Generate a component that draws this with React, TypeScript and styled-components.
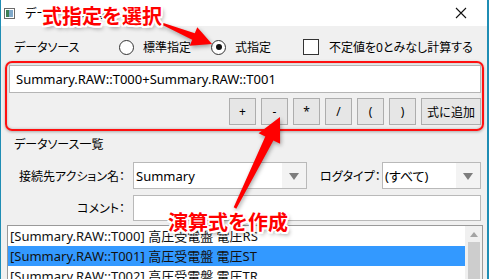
import styled, { createGlobalStyle } from 'styled-components';

const GlobalStyle = createGlobalStyle`
  body {
    margin: 0;
    background: #ffffff;
    font-family: "Noto Sans", "Noto Sans CJK JP", sans-serif;
    font-feature-settings: "palt";
    color: #000;
  }
`;

type Point = [number, number];

// builds a tapered arrow polygon from tail to tip
const arrowPoints = (
  tail: Point,
  tip: Point,
  tailW: number,
  neckW: number,
  headW: number,
  headL: number,
) => {
  const [x0, y0] = tail;
  const [x1, y1] = tip;
  const len = Math.hypot(x1 - x0, y1 - y0);
  const ux = (x1 - x0) / len;
  const uy = (y1 - y0) / len;
  const nx = -uy;
  const ny = ux;
  const bx = x1 - ux * headL;
  const by = y1 - uy * headL;
  const pts: Point[] = [
    [x0 + (nx * tailW) / 2, y0 + (ny * tailW) / 2],
    [bx + (nx * neckW) / 2, by + (ny * neckW) / 2],
    [bx + (nx * headW) / 2, by + (ny * headW) / 2],
    [x1, y1],
    [bx - (nx * headW) / 2, by - (ny * headW) / 2],
    [bx - (nx * neckW) / 2, by - (ny * neckW) / 2],
    [x0 - (nx * tailW) / 2, y0 - (ny * tailW) / 2],
  ];
  return pts.map((p) => p.map((v) => v.toFixed(1)).join(',')).join(' ');
};

const operators = ['+', '-', '*', '/', '(', ')'];

const sources = [
  { id: 'T000', name: '高圧受電盤 電圧RS' },
  { id: 'T001', name: '高圧受電盤 電圧ST' },
  { id: 'T002', name: '高圧受電盤 電圧TR' },
];

const App: React.FC = () => {
  return (
    <>
      <GlobalStyle />
      <Window>
        <TitleBar>
          <AppIcon width="11" height="11" viewBox="0 0 11 11">
            <rect x="0.5" y="0.5" width="10" height="10" fill="#fff" stroke="#6b6b6b" />
            <rect x="2" y="2" width="3" height="7" fill="#3d7f56" />
            <rect x="5" y="2" width="4" height="7" fill="#7fa8c9" />
          </AppIcon>
          <Title>データソース選択</Title>
          <CloseIcon width="12" height="12" viewBox="0 0 12 12">
            <path d="M1 1 L11 11 M11 1 L1 11" stroke="#111" strokeWidth="1.1" />
          </CloseIcon>
        </TitleBar>

        <Body>
          <SourceRow>
            <Label>データソース</Label>
            <Option>
              <Radio />
              <span>標準指定</span>
            </Option>
            <Option>
              <Radio $checked />
              <span>式指定</span>
            </Option>
            <Option>
              <CheckBox />
              <span>不定値を0とみなし計算する</span>
            </Option>
          </SourceRow>

          <FormulaBox>
            <FormulaInput>Summary.RAW::T000+Summary.RAW::T001</FormulaInput>
            <OperatorRow>
              {operators.map((op) => (
                <OpButton key={op}>{op}</OpButton>
              ))}
              <OpButton $wide>式に追加</OpButton>
            </OperatorRow>
          </FormulaBox>

          <SectionTitle>データソース一覧</SectionTitle>

          <FilterGrid>
            <FieldLabel>接続先アクション名：</FieldLabel>
            <Combo>
              <ComboValue>Summary</ComboValue>
              <ComboArrow />
            </Combo>
            <SideLabel>ログタイプ：</SideLabel>
            <Combo>
              <ComboValue>(すべて)</ComboValue>
              <ComboArrow />
            </Combo>
            <FieldLabel>コメント：</FieldLabel>
            <CommentInput />
          </FilterGrid>

          <SourceList>
            <Rows>
              {sources.map((s) => (
                <Row key={s.id} $selected={s.id === 'T001'}>
                  [Summary.RAW::{s.id}] {s.name}
                </Row>
              ))}
            </Rows>
            <ScrollBar>
              <ScrollUp />
              <ScrollThumb />
            </ScrollBar>
          </SourceList>
        </Body>

        <Overlay width="490" height="279" viewBox="0 0 490 279">
          <polygon
            points={arrowPoints([163, 24], [212, 44], 2, 7, 20, 20)}
            fill="#ff0000"
          />
          <polygon
            points={arrowPoints([235, 208], [280, 117], 3, 9, 24, 24)}
            fill="#ff0000"
          />
        </Overlay>
        <Callout $left={42} $top={3}>
          式指定を選択
        </Callout>
        <Callout $left={168} $top={209}>
          演算式を作成
        </Callout>
      </Window>
    </>
  );
};

const Window = styled.div`
  position: relative;
  width: 486px;
  height: 279px;
  overflow: hidden;
  background: #f0f0f0;
  border-left: 1px solid #1f8db4;
  border-right: 2px solid #1f8db4;
  font-size: 12px;
`;

const TitleBar = styled.div`
  display: flex;
  align-items: center;
  height: 26px;
  background: #ffffff;
  padding-left: 3px;
`;

const AppIcon = styled.svg`
  flex: none;
`;

const Title = styled.span`
  margin-left: 10px;
  font-size: 12px;
`;

const CloseIcon = styled.svg`
  margin-left: auto;
  margin-right: 20px;
`;

const Body = styled.div`
  display: flex;
  flex-direction: column;
  padding-left: 4px;
`;

const SourceRow = styled.div`
  display: grid;
  grid-template-columns: 105px 92px 92px auto;
  align-items: center;
  height: 18px;
  margin-top: 12px;
  padding-left: 9px;
`;

const Label = styled.span``;

const Option = styled.label`
  display: flex;
  align-items: center;
  gap: 9px;
`;

const Radio = styled.span<{ $checked?: boolean }>`
  position: relative;
  width: 13px;
  height: 13px;
  border: 1px solid #333;
  border-radius: 50%;
  background: #fff;

  &::after {
    content: '';
    display: ${({ $checked }) => ($checked ? 'block' : 'none')};
    position: absolute;
    left: 3.5px;
    top: 3.5px;
    width: 6px;
    height: 6px;
    border-radius: 50%;
    background: #111;
  }
`;

const CheckBox = styled.span`
  width: 14px;
  height: 14px;
  border: 1px solid #333;
  background: #fff;
  margin-right: 1px;
`;

const FormulaBox = styled.div`
  display: flex;
  flex-direction: column;
  gap: 5px;
  width: 479px;
  height: 70px;
  box-sizing: border-box;
  margin-top: 5px;
  padding: 2px 1px 4px 2px;
  border: 2px solid #ff1010;
  border-radius: 7px;
  box-shadow: inset 0 0 3px rgba(0, 0, 0, 0.25), 0 1px 3px rgba(0, 0, 0, 0.3);
`;

const FormulaInput = styled.div`
  display: flex;
  align-items: center;
  height: 28px;
  box-sizing: border-box;
  padding-left: 6px;
  background: #fff;
  border: 1px solid #b5b5b5;
  font-size: 13px;
`;

const OperatorRow = styled.div`
  display: flex;
  justify-content: flex-end;
  gap: 5px;
`;

const OpButton = styled.button<{ $wide?: boolean }>`
  width: ${({ $wide }) => ($wide ? 60 : 27)}px;
  height: 27px;
  padding: 0;
  background: #e6e6e6;
  border: 1px solid #adadad;
  font-family: inherit;
  font-size: 12px;
  color: #000;
`;

const SectionTitle = styled.div`
  height: 16px;
  line-height: 16px;
  margin-top: 6px;
  padding-left: 9px;
`;

const FilterGrid = styled.div`
  display: grid;
  grid-template-columns: 128px 174px 75px 99px;
  grid-template-rows: 27px 26px;
  row-gap: 6px;
  margin-top: 9px;
  align-items: center;
`;

const FieldLabel = styled.span`
  text-align: right;
  padding-right: 8px;
`;

const SideLabel = styled.span`
  padding-left: 13px;
`;

const Combo = styled.div`
  display: flex;
  height: 27px;
  box-sizing: border-box;
  border: 1px solid #b9b9b9;
  background: #fff;
`;

const ComboValue = styled.span`
  flex: 1;
  display: flex;
  align-items: center;
  padding-left: 2px;
  font-size: 13px;
`;

const ComboArrow = styled.span`
  position: relative;
  width: 24px;
  background: #f3f3f3;

  &::after {
    content: '';
    position: absolute;
    left: 7px;
    top: 10px;
    border-left: 5px solid transparent;
    border-right: 5px solid transparent;
    border-top: 7px solid #7d7d7d;
  }
`;

const CommentInput = styled.div`
  grid-column: 2 / 5;
  height: 26px;
  box-sizing: border-box;
  border: 1px solid #b9b9b9;
  background: #fff;
`;

const SourceList = styled.div`
  display: flex;
  width: 474px;
  height: 70px;
  margin-top: 4px;
  margin-left: 2px;
  border: 1px solid #9a9a9a;
  background: #fff;
`;

const Rows = styled.div`
  flex: 1;
  display: flex;
  flex-direction: column;
`;

const Row = styled.div<{ $selected?: boolean }>`
  height: 20px;
  line-height: 20px;
  padding-left: 2px;
  font-size: 13px;
  white-space: nowrap;
  background: ${({ $selected }) => ($selected ? '#3399ff' : 'transparent')};
  color: #111;
`;

const ScrollBar = styled.div`
  display: flex;
  flex-direction: column;
  align-items: center;
  width: 17px;
  background: #f0f0f0;
`;

const ScrollUp = styled.span`
  margin-top: 6px;
  margin-bottom: 5px;
  border-left: 4px solid transparent;
  border-right: 4px solid transparent;
  border-bottom: 5px solid #a3a3a3;
`;

const ScrollThumb = styled.span`
  width: 12px;
  flex: 1;
  background: #cdcdcd;
`;

const Overlay = styled.svg`
  position: absolute;
  left: -1px;
  top: 0;
  pointer-events: none;
  filter: drop-shadow(1px 2px 2px rgba(0, 0, 0, 0.35));
`;

const Callout = styled.div<{ $left: number; $top: number }>`
  position: absolute;
  left: ${({ $left }) => $left - 1}px;
  top: ${({ $top }) => $top}px;
  font-family: "Noto Sans CJK JP", sans-serif;
  font-feature-settings: normal;
  font-size: 20px;
  font-weight: 700;
  line-height: 26px;
  color: #ff0000;
  white-space: nowrap;
  text-shadow:
    -2px 0 0 #fff, 2px 0 0 #fff, 0 -2px 0 #fff, 0 2px 0 #fff,
    -1.5px -1.5px 0 #fff, 1.5px -1.5px 0 #fff, -1.5px 1.5px 0 #fff,
    1.5px 1.5px 0 #fff, 2px 3px 4px rgba(0, 0, 0, 0.45);
`;

export default App;
